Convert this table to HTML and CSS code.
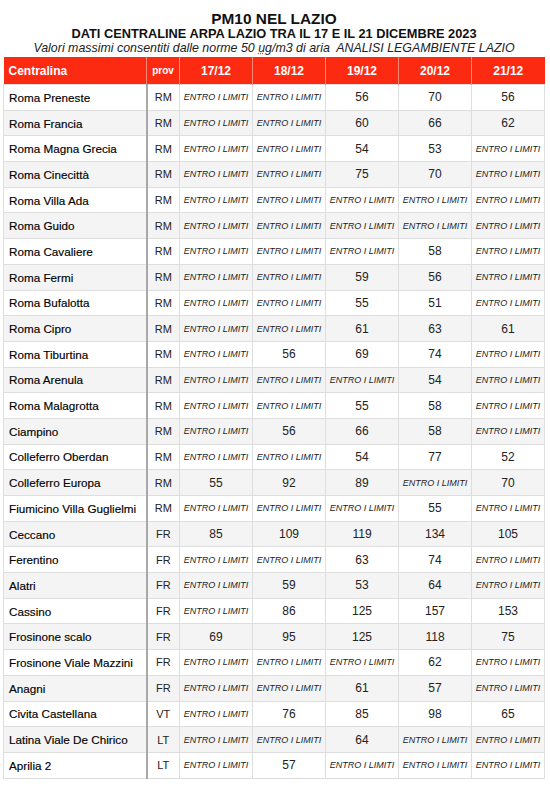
FILE: index.html
```html
<!DOCTYPE html>
<html lang="it">
<head>
    <meta charset="UTF-8">
    <meta name="viewport" content="width=device-width, initial-scale=1.0">
    <title>PM10 nel Lazio</title>
    <link rel="stylesheet" href="styles.css">
</head>
<body>
    <div class="titles">
        <h1>PM10 NEL LAZIO</h1>
        <h2>DATI CENTRALINE ARPA LAZIO TRA IL 17 E IL 21 DICEMBRE 2023</h2>
        <p>Valori massimi consentiti dalle norme 50 <span class="typo">ug</span>/m3 di aria&nbsp; ANALISI LEGAMBIENTE LAZIO</p>
    </div>

    <table class="pm-table">
        <colgroup>
            <col class="c-name">
            <col class="c-prov">
            <col class="c-day" span="5">
        </colgroup>
        <thead>
            <tr>
                <th class="name">Centralina</th>
                <th class="prov">prov</th>
                <th>17/12</th>
                <th>18/12</th>
                <th>19/12</th>
                <th>20/12</th>
                <th>21/12</th>
            </tr>
        </thead>
        <tbody id="rows"></tbody>
    </table>

    <script>
        // E = entro i limiti
        const data = [
            ['Roma Preneste', 'RM', 'E', 'E', 56, 70, 56],
            ['Roma Francia', 'RM', 'E', 'E', 60, 66, 62],
            ['Roma Magna Grecia', 'RM', 'E', 'E', 54, 53, 'E'],
            ['Roma Cinecittà', 'RM', 'E', 'E', 75, 70, 'E'],
            ['Roma Villa Ada', 'RM', 'E', 'E', 'E', 'E', 'E'],
            ['Roma Guido', 'RM', 'E', 'E', 'E', 'E', 'E'],
            ['Roma Cavaliere', 'RM', 'E', 'E', 'E', 58, 'E'],
            ['Roma Fermi', 'RM', 'E', 'E', 59, 56, 'E'],
            ['Roma Bufalotta', 'RM', 'E', 'E', 55, 51, 'E'],
            ['Roma Cipro', 'RM', 'E', 'E', 61, 63, 61],
            ['Roma Tiburtina', 'RM', 'E', 56, 69, 74, 'E'],
            ['Roma Arenula', 'RM', 'E', 'E', 'E', 54, 'E'],
            ['Roma Malagrotta', 'RM', 'E', 'E', 55, 58, 'E'],
            ['Ciampino', 'RM', 'E', 56, 66, 58, 'E'],
            ['Colleferro Oberdan', 'RM', 'E', 'E', 54, 77, 52],
            ['Colleferro Europa', 'RM', 55, 92, 89, 'E', 70],
            ['Fiumicino Villa Guglielmi', 'RM', 'E', 'E', 'E', 55, 'E'],
            ['Ceccano', 'FR', 85, 109, 119, 134, 105],
            ['Ferentino', 'FR', 'E', 'E', 63, 74, 'E'],
            ['Alatri', 'FR', 'E', 59, 53, 64, 'E'],
            ['Cassino', 'FR', 'E', 86, 125, 157, 153],
            ['Frosinone scalo', 'FR', 69, 95, 125, 118, 75],
            ['Frosinone Viale Mazzini', 'FR', 'E', 'E', 'E', 62, 'E'],
            ['Anagni', 'FR', 'E', 'E', 61, 57, 'E'],
            ['Civita Castellana', 'VT', 'E', 76, 85, 98, 65],
            ['Latina Viale De Chirico', 'LT', 'E', 'E', 64, 'E', 'E'],
            ['Aprilia 2', 'LT', 'E', 57, 'E', 'E', 'E']
        ];

        const tbody = document.getElementById('rows');
        data.forEach(row => {
            const tr = document.createElement('tr');
            row.forEach((value, i) => {
                const td = document.createElement('td');
                if (i === 0) {
                    td.className = 'name';
                    td.textContent = value;
                } else if (i === 1) {
                    td.className = 'prov';
                    td.textContent = value;
                } else if (value === 'E') {
                    td.className = 'ok';
                    td.textContent = 'ENTRO I LIMITI';
                } else {
                    td.className = 'val';
                    td.textContent = value;
                }
                tr.appendChild(td);
            });
            tbody.appendChild(tr);
        });
    </script>
</body>
</html>
```

FILE: styles.css
```css
body {
    font-family: "Liberation Sans", Arial, sans-serif;
    margin: 0;
    padding: 11px 5px 0 3px;
    background-color: white;
    color: #111;
}

.titles {
    text-align: center;
    margin-bottom: 2px;
}

.titles h1 {
    font-size: 15.4px;
    line-height: 16px;
    margin: 0;
    font-weight: bold;
}

.titles h2 {
    font-size: 12.8px;
    line-height: 14px;
    margin: 0;
    font-weight: bold;
}

.titles p {
    font-size: 12.4px;
    line-height: 14px;
    margin: 0;
    font-style: italic;
    color: #222;
}

.typo {
    text-decoration: underline dotted #e33;
}

.pm-table {
    width: 542px;
    border-collapse: collapse;
    table-layout: fixed;
}

.c-name { width: 143px; }
.c-prov { width: 33px; }
.c-day { width: 73px; }

.pm-table th {
    background-color: #fd2a12;
    color: white;
    font-size: 12px;
    font-weight: bold;
    height: 27px;
    padding: 0;
    text-align: center;
    border-left: 1px solid #ff8a78;
}

.pm-table th.name {
    text-align: left;
    padding-left: 5px;
    border-left: none;
}

.pm-table th.prov {
    font-size: 10px;
}

.pm-table td {
    height: 24.7px;
    padding: 0;
    text-align: center;
    border: 1px solid #dedede;
    color: #222;
}

.pm-table tbody tr:nth-child(even) td {
    background-color: #f4f4f4;
}

.pm-table td.name {
    text-align: left;
    padding-left: 5px;
    font-size: 11.7px;
    color: #000;
    -webkit-text-stroke: 0.15px #000;
    border-right: 2px solid #a8a8a8;
}

.pm-table td.prov {
    font-size: 11px;
}

.pm-table td.ok {
    font-size: 9px;
    font-style: italic;
}

.pm-table td.val {
    font-size: 12px;
}
```
